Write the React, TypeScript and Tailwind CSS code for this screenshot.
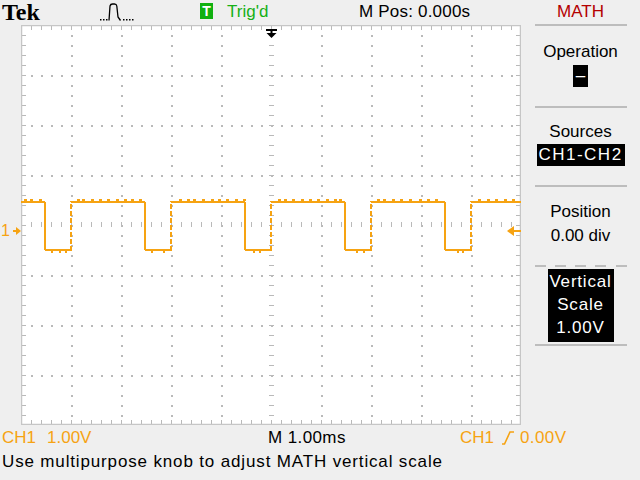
import React from "react";

// Tek scope screen: MATH menu, CH1-CH2 square wave
const ORANGE = "#f6a312";
const GRID = "#b9b9b9";

const FALLS = [24, 124, 224, 324, 424];
const RISES = [50, 150, 250, 350, 450];
const HIGH = 177;
const LOW = 225;

// small bits of noise sitting on the trace
const NOISE_HIGH = [3, 9, 18, 56, 61, 70, 78, 86, 95, 103, 110, 118, 158, 166, 172, 181, 190, 197, 205, 214, 222, 257, 263, 271, 280, 288, 296, 305, 313, 318, 356, 362, 371, 379, 388, 398, 406, 414, 457, 466, 474, 483, 491];
const NOISE_LOW = [30, 38, 44, 130, 142, 232, 238, 335, 342, 436, 441];

function Graticule() {
  const ticks: React.ReactNode[] = [];
  for (let i = 10; i < 500; i += 10) {
    ticks.push(<rect key={"t" + i} x={i} y={1} width={1} height={4} fill={GRID} />);
    ticks.push(<rect key={"b" + i} x={i} y={395} width={1} height={4} fill={GRID} />);
    ticks.push(<rect key={"c" + i} x={i} y={197} width={1} height={5} fill={GRID} />);
  }
  for (let j = 10; j < 400; j += 10) {
    ticks.push(<rect key={"l" + j} x={1} y={j} width={4} height={1} fill={GRID} />);
    ticks.push(<rect key={"r" + j} x={495} y={j} width={4} height={1} fill={GRID} />);
    ticks.push(<rect key={"m" + j} x={248} y={j} width={5} height={1} fill={GRID} />);
  }
  const dots: React.ReactNode[] = [];
  for (let k = 50; k < 500; k += 50) {
    if (k === 250) continue;
    for (let j = 10; j < 400; j += 10) {
      dots.push(<rect key={"v" + k + "-" + j} x={k} y={j} width={2} height={2} fill={GRID} />);
    }
  }
  for (let k = 50; k < 400; k += 50) {
    if (k === 200) continue;
    for (let i = 10; i < 500; i += 10) {
      dots.push(<rect key={"h" + k + "-" + i} x={i} y={k} width={2} height={2} fill={GRID} />);
    }
  }

  const highs: [number, number][] = [[0, FALLS[0]]];
  for (let n = 0; n < RISES.length; n++) {
    highs.push([RISES[n], n + 1 < FALLS.length ? FALLS[n + 1] : 500]);
  }

  return (
    <svg width={500} height={400} viewBox="0 0 500 400" className="block">
      <rect x={0} y={0} width={500} height={400} fill="#ffffff" />
      {dots}
      {ticks}
      <rect x={0.5} y={0.5} width={499} height={399} fill="none" stroke="#c6c6c6" strokeWidth={1.5} />

      {highs.map(([a, b]) => (
        <line key={"hi" + a} x1={a} y1={HIGH} x2={b} y2={HIGH} stroke={ORANGE} strokeWidth={2} />
      ))}
      {FALLS.map((f, n) => (
        <g key={"f" + f}>
          <line x1={f} y1={HIGH} x2={f} y2={LOW} stroke={ORANGE} strokeWidth={2} />
          <line x1={f} y1={LOW} x2={RISES[n]} y2={LOW} stroke={ORANGE} strokeWidth={2} />
        </g>
      ))}
      {RISES.map((r) => (
        <line key={"r" + r} x1={r} y1={LOW + 1} x2={r} y2={HIGH - 1} stroke={ORANGE} strokeWidth={2} strokeDasharray="5 2" />
      ))}
      {NOISE_HIGH.map((x) => (
        <rect key={"nh" + x} x={x} y={HIGH - 3} width={3} height={2} fill={ORANGE} />
      ))}
      {NOISE_LOW.map((x) => (
        <rect key={"nl" + x} x={x} y={LOW + 1} width={2} height={2} fill={ORANGE} />
      ))}

      {/* trigger position marker */}
      <rect x={245} y={4} width={11} height={2} fill="#000" />
      <rect x={249.5} y={4} width={2} height={5} fill="#000" />
      <polygon points="245.5,8 255.5,8 250.5,13" fill="#000" />

      {/* trigger level marker */}
      <polygon points="486,206 493,201 493,211" fill={ORANGE} />
      <rect x={492} y={205} width={8} height={2} fill={ORANGE} />
    </svg>
  );
}

function PulseIcon() {
  return (
    <svg width={36} height={20} viewBox="0 0 36 20" className="block">
      {[0, 3, 6].map((x) => (
        <rect key={"a" + x} x={x} y={17} width={1.5} height={1.5} fill="#000" />
      ))}
      {[23, 26, 29, 32].map((x) => (
        <rect key={"b" + x} x={x} y={17} width={1.5} height={1.5} fill="#000" />
      ))}
      <path d="M9 18.5 L10 4 Q10.5 2 12.5 2 L14.5 2 Q16.5 2 16.8 4 L18 15 L20.5 18.5" fill="none" stroke="#000" strokeWidth={1.3} />
    </svg>
  );
}

function SlopeIcon() {
  return (
    <svg width={14} height={16} viewBox="0 0 14 16" className="block">
      <path d="M1 14 L3.5 14 L9 2 L13 2" fill="none" stroke={ORANGE} strokeWidth={1.6} />
    </svg>
  );
}

function Separator() {
  return <div className="w-[92px] h-[2px] bg-[#bdbdbd]" />;
}

function MathMenu() {
  return (
    <div className="w-[119px] flex flex-col items-center text-black">
      <div className="h-[24px] leading-[24px] text-[#b40000]">MATH</div>
      <Separator />

      <div className="mt-[16px] leading-[20px]">Operation</div>
      <div className="mt-[3px] w-[15px] h-[22px] leading-[22px] bg-black text-white text-center">–</div>
      <div className="mt-[19px]">
        <Separator />
      </div>

      <div className="mt-[14px] leading-[20px]">Sources</div>
      <div className="mt-[2px] w-[88px] h-[22px] leading-[22px] bg-black text-white text-center tracking-[1.5px]">CH1-CH2</div>
      <div className="mt-[19px]">
        <Separator />
      </div>

      <div className="mt-[13px] leading-[24px]">Position</div>
      <div className="leading-[24px]">0.00 div</div>
      <div className="mt-[17px] w-[92px] flex justify-between">
        {[0, 1, 2, 3, 4].map((i) => (
          <div key={i} className="w-[11px] h-[2px] bg-[#bdbdbd]" />
        ))}
      </div>

      <div className="mt-[2px] w-[66px] h-[73px] pt-[1px] bg-black text-white text-center leading-[23px] flex flex-col">
        <span className="tracking-[0.8px]">Vertical</span>
        <span className="tracking-[0.8px]">Scale</span>
        <span className="tracking-[0.8px]">1.00V</span>
      </div>
      <div className="mt-[2px]">
        <Separator />
      </div>
    </div>
  );
}

export default function App() {
  return (
    <div
      className="w-[640px] h-[480px] bg-[#efefef] overflow-hidden flex flex-col text-[17px]"
      style={{ fontFamily: '"Liberation Sans", Arial, sans-serif' }}
    >
      <div className="flex h-[425px]">
        <div className="w-[521px] flex flex-col">
          {/* top status bar */}
          <div className="h-[25px] flex items-start">
            <div
              className="w-[100px] pl-[2px] leading-[25px] text-[24px] font-bold text-black"
              style={{ fontFamily: '"Liberation Serif", "Times New Roman", serif' }}
            >
              Tek
            </div>
            <div className="w-[100px] pt-[2px]">
              <PulseIcon />
            </div>
            <div className="w-[159px] flex items-start">
              <div className="mt-[3px] w-[13px] h-[16px] bg-[#10b010] text-white text-[14px] leading-[16px] text-center font-bold">T</div>
              <div className="ml-[14px] leading-[24px] text-[#16b016]">Trig&apos;d</div>
            </div>
            <div className="leading-[24px] text-black tracking-[0.2px]">M Pos: 0.000s</div>
          </div>

          {/* graticule row */}
          <div className="flex h-[400px]">
            <div className="w-[21px] pt-[199px]">
              <div className="flex items-center h-[14px] text-[#f6a312] leading-[14px]">
                <span className="ml-[1px] text-[16px]">1</span>
                <svg width={8} height={8} viewBox="0 0 8 8" className="ml-[3px] block">
                  <rect x={0} y={3} width={4} height={2} fill={ORANGE} />
                  <polygon points="3,0 8,4 3,8" fill={ORANGE} />
                </svg>
              </div>
            </div>
            <Graticule />
          </div>
        </div>
        <MathMenu />
      </div>

      {/* readouts */}
      <div className="h-[25px] leading-[25px] flex text-[#f6a312]">
        <div className="w-[47px] pl-[2px]">CH1</div>
        <div className="w-[221px]">1.00V</div>
        <div className="w-[192px] text-black tracking-[0.4px]">M 1.00ms</div>
        <div className="flex items-center">
          <span>CH1</span>
          <span className="ml-[7px]">
            <SlopeIcon />
          </span>
          <span className="ml-[5px] tracking-[0.4px]">0.00V</span>
        </div>
      </div>
      <div className="h-[24px] leading-[24px] pl-[2px] text-black tracking-[0.85px]">Use multipurpose knob to adjust MATH vertical scale</div>
    </div>
  );
}
